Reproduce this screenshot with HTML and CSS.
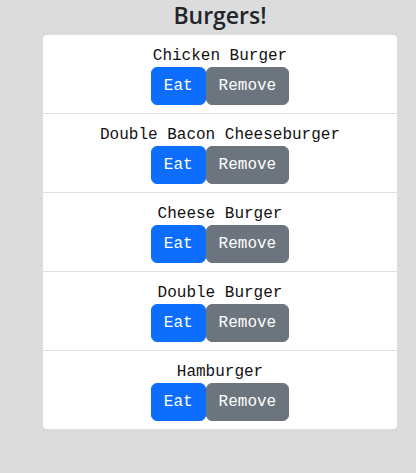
FILE: index.html
```html
<!DOCTYPE html>
<html>
<head>
<meta charset="utf-8">
<link rel="stylesheet" href="styles.css">
</head>
<body>
<h4 class="title">Burgers!</h4>
<ul class="card">
  <li class="row"><div class="name">Chicken Burger</div><div class="actions"><button class="btn eat">Eat</button><button class="btn remove">Remove</button></div></li>
  <li class="row"><div class="name">Double Bacon Cheeseburger</div><div class="actions"><button class="btn eat">Eat</button><button class="btn remove">Remove</button></div></li>
  <li class="row"><div class="name">Cheese Burger</div><div class="actions"><button class="btn eat">Eat</button><button class="btn remove">Remove</button></div></li>
  <li class="row"><div class="name">Double Burger</div><div class="actions"><button class="btn eat">Eat</button><button class="btn remove">Remove</button></div></li>
  <li class="row"><div class="name">Hamburger</div><div class="actions"><button class="btn eat">Eat</button><button class="btn remove">Remove</button></div></li>
</ul>
</body>
</html>
```
FILE: styles.css
```css
html, body {
  margin: 0;
  padding: 0;
  background: #dcdcdc;
}
body {
  font-family: "Courier New", "Liberation Mono", monospace;
}
.title {
  margin: 0 0 5px 0;
  padding-top: 1px;
  text-align: center;
  font-family: "Open Sans", "Noto Sans", sans-serif;
  font-weight: 600;
  font-size: 23px;
  line-height: 29px;
  color: #212529;
  padding-left: 24px;
}
.card {
  list-style: none;
  margin: 0 0 0 43px;
  padding: 0;
  width: 354px;
  background: #fff;
  border-radius: 4px;
}
.row {
  padding: 8px 16px;
  border-bottom: 1px solid #dee2e6;
  text-align: center;
}
.row:last-child {
  border-bottom: none;
}
.name {
  font-size: 16px;
  line-height: 24px;
  color: #111;
  padding-top: 1px;
  margin-bottom: -1px;
}
.actions {
  display: flex;
  justify-content: center;
}
.btn {
  font-family: "Courier New", "Liberation Mono", monospace;
  font-size: 16px;
  line-height: 24px;
  padding: 6px 12px;
  border: 1px solid transparent;
  border-radius: 6px;
  color: #fff;
  cursor: pointer;
}
.eat {
  background: #0d6efd;
  border-color: #0d6efd;
}
.remove {
  background: #6c757d;
  border-color: #6c757d;
}
```
